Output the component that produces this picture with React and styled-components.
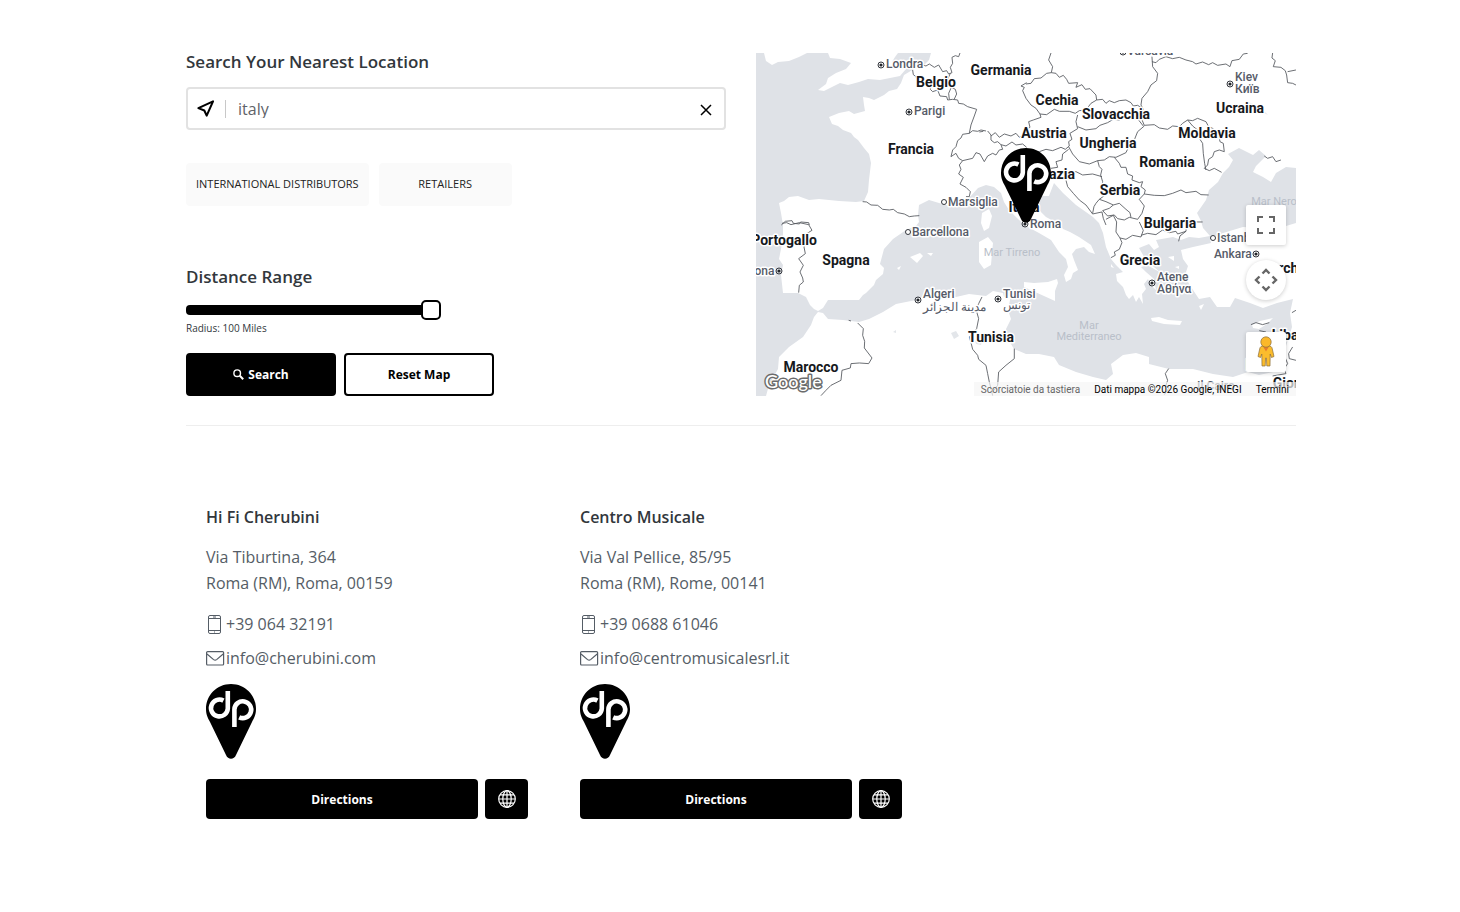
import React, { useState } from 'react';
import styled, { createGlobalStyle } from 'styled-components';

const GlobalStyle = createGlobalStyle`
  *, *::before, *::after {
    box-sizing: border-box;
  }

  body {
    margin: 0;
    background-color: #ffffff;
    color: #555d66;
    font-family: 'Open Sans', 'Noto Sans', sans-serif;
    font-size: 16px;
  }

  button, input {
    font-family: inherit;
  }

  h2, h3, p, ul, address {
    margin: 0;
    padding: 0;
    font-style: normal;
  }
`;

const Page = styled.main`
  max-width: 1132px;
  margin: 0 auto;
  padding: 53px 0 60px 22px;
`;

const Finder = styled.section`
  display: grid;
  grid-template-columns: 1fr 1fr;
  gap: 30px;
  padding-bottom: 29px;
  border-bottom: 1px solid #eeeeee;

  @media (max-width: 860px) {
    grid-template-columns: 1fr;
  }
`;

const SearchForm = styled.form`
  display: flex;
  flex-direction: column;
  align-items: flex-start;
`;

const FieldLabel = styled.label`
  font-size: 17px;
  line-height: 18px;
  font-weight: 600;
  color: #32373c;
`;

const SearchBox = styled.div`
  display: flex;
  align-items: center;
  width: 100%;
  height: 43px;
  margin: 16px 0 33px;
  padding: 0 10px 0 8px;
  border: 2px solid #e2e2e2;
  border-radius: 4px;
`;

const SearchInput = styled.input`
  flex: 1;
  min-width: 0;
  height: 18px;
  margin-left: 10px;
  padding: 0 12px;
  border: 0;
  border-left: 1px solid #c8c8c8;
  outline: none;
  font-size: 16px;
  line-height: 18px;
  color: #5f6368;
`;

const ClearButton = styled.button`
  display: flex;
  padding: 3px 2px 0;
  border: 0;
  background: none;
  cursor: pointer;
`;

const Categories = styled.div`
  display: flex;
  gap: 10px;
  margin-bottom: 62px;
`;

const CategoryButton = styled.button`
  min-width: 133px;
  height: 43px;
  padding: 0 10px 2px;
  border: 0;
  border-radius: 4px;
  background-color: #fafafa;
  color: #222222;
  font-size: 11px;
  text-transform: uppercase;
  cursor: pointer;
`;

const RangeInput = styled.input`
  appearance: none;
  width: 255px;
  height: 20px;
  margin: 14px 0 2px;
  background: none;

  &::-webkit-slider-runnable-track {
    height: 10px;
    border-radius: 4px;
    background-color: #000000;
  }

  &::-webkit-slider-thumb {
    appearance: none;
    width: 20px;
    height: 20px;
    margin-top: -5px;
    border: 2px solid #000000;
    border-radius: 5px;
    background-color: #ffffff;
  }
`;

const RangeValue = styled.p`
  font-size: 10px;
  line-height: 12px;
  color: #32373c;
`;

const Actions = styled.div`
  display: flex;
  gap: 8px;
  margin-top: 19px;
`;

const ActionButton = styled.button`
  display: flex;
  align-items: center;
  justify-content: center;
  gap: 4px;
  width: 150px;
  height: 43px;
  border: 2px solid #000000;
  border-radius: 4px;
  background-color: ${props => props.$outlined ? '#ffffff' : '#000000'};
  color: ${props => props.$outlined ? '#000000' : '#ffffff'};
  font-size: 12px;
  font-weight: 700;
  cursor: pointer;
`;

const MapFrame = styled.div`
  position: relative;
  overflow: hidden;
  min-height: 343px;
  background-color: #dfe2e7;
`;

const MapDrawing = styled.svg`
  position: absolute;
  inset: 0;
  width: 100%;
  height: 100%;
  font-family: Roboto, sans-serif;

  text {
    paint-order: stroke;
    stroke: #ffffff;
    stroke-width: 3px;
    stroke-linejoin: round;
  }

  .country {
    font-size: 14px;
    font-weight: 700;
    fill: #16181c;
  }

  .city {
    font-size: 12px;
    font-weight: 500;
    fill: #565b68;
  }

  .sea {
    font-size: 11px;
    fill: #b9bfc9;
    stroke: none;
  }

  .logo {
    font-family: Lato, sans-serif;
    font-size: 18px;
    font-weight: 500;
    fill: #ffffff;
    stroke: #6b6b6b;
  }
`;

const MapControls = styled.div`
  position: absolute;
  top: 152px;
  right: 10px;
  bottom: 24px;
  display: flex;
  flex-direction: column;
  justify-content: space-between;
`;

const ControlGroup = styled.div`
  display: flex;
  flex-direction: column;
  gap: 15px;
`;

const MapControl = styled.button`
  display: flex;
  align-items: center;
  justify-content: center;
  width: 40px;
  height: 40px;
  padding: 0;
  border: 0;
  border-radius: ${props => props.$round ? '50%' : '2px'};
  background-color: #ffffff;
  box-shadow: 0 1px 4px rgba(0, 0, 0, 0.2);
  cursor: pointer;
`;

const MapFooter = styled.div`
  position: absolute;
  right: 0;
  bottom: 0;
  display: flex;
  font-family: Roboto, sans-serif;
  font-size: 10px;
  line-height: 12px;
`;

const FooterItem = styled.span`
  padding: 2px 7px 0;
  background-color: rgba(245, 245, 245, 0.7);
  color: ${props => props.$muted ? '#666666' : '#000000'};
`;

const FooterLink = styled.a`
  padding: 2px 7px 0;
  background-color: rgba(245, 245, 245, 0.7);
  color: #000000;
  text-decoration: none;
`;

const StoreList = styled.ul`
  display: grid;
  grid-template-columns: repeat(3, 1fr);
  gap: 52px;
  padding: 81px 20px 0;
  list-style: none;

  @media (max-width: 960px) {
    grid-template-columns: 1fr;
  }
`;

const StoreName = styled.h3`
  margin-bottom: 17px;
  font-size: 16px;
  line-height: 20px;
  font-weight: 600;
  color: #32373c;
`;

const StoreAddress = styled.address`
  margin-bottom: 15px;
  line-height: 26px;
`;

const ContactLink = styled.a`
  display: flex;
  align-items: center;
  gap: 1px;
  margin-bottom: 8px;
  line-height: 26px;
  color: #555d66;
  text-decoration: none;
`;

const StorePin = styled.div`
  display: flex;
  margin: 13px 0 20px;
`;

const StoreActions = styled.div`
  display: flex;
  gap: 7px;
`;

const StoreLink = styled.a`
  flex: ${props => props.$icon ? '0 0 43px' : '1'};
  display: flex;
  align-items: center;
  justify-content: center;
  height: 40px;
  border-radius: 4px;
  background-color: #000000;
  color: #ffffff;
  font-size: 12px;
  font-weight: 700;
  text-decoration: none;
`;

const LAND = [
  // Ireland and Great Britain
  'M8 0L10 8 16 12 22 9 33 8 43 4 51 0Z',
  'M72 0L74 5 84 6 95 10 90 16 80 20 72 25 70 31 62 37 68 38 78 33 84 30 92 32 103 29 112 26 124 27 134 25 144 23 150 16 146 12 140 10 136 9 139 4 142 0Z',
  // mainland Europe and the Middle East
  'M175 0L173 7 168 12 158 16 148 22 145 30 141 36 133 38 128 42 118 47 113 45 107 44 108 52 109 58 98 61 93 58 83 60 73 64 76 71 82 73 87 77 95 80 98 84 102 87 108 95 113 101 115 110 113 127 112 139 108 148 100 149 83 148 63 146 53 147 42 143 33 144 28 148 23 150 25 160 27 172 27 186 23 206 27 212 25 222 27 240 42 240 50 244 54 252 58 256 62 258 67 255 72 247 87 247 103 247 107 242 110 240 118 232 120 227 127 221 128 215 124 211 128 196 137 186 150 177 160 173 163 169 162 162 163 152 173 147 183 150 197 154 213 145 222 135 230 132 238 134 245 140 248 149 253 157 262 166 270 173 283 180 295 187 303 199 310 206 312 214 308 222 310 229 315 226 317 220 322 217 318 207 316 201 320 196 328 194 333 199 339 201 335 192 323 184 314 179 307 176 303 171 290 164 283 157 282 148 286 143 293 143 298 130 307 140 320 152 337 164 343 170 347 180 350 194 355 206 360 212 367 219 360 221 361 228 367 234 370 242 373 246 377 242 380 249 383 244 387 251 386 241 390 236 388 231 392 226 395 232 400 237 398 226 390 219 385 214 392 212 387 202 383 195 393 191 398 197 403 194 400 187 417 184 425 187 433 184 443 185 454 183 447 175 445 168 441 160 450 147 453 137 462 129 467 120 473 114 477 107 472 101 483 95 497 102 503 97 510 103 500 113 497 119 507 124 515 129 520 120 530 114 540 115 540 0Z',
  // Anatolia, the Levant and north Africa
  'M425 197L437 194 455 190 454 186 467 180 487 174 505 175 520 176 540 170 540 343 10 343 13 332 22 316 23 304 33 294 47 284 55 272 58 264 62 259 67 260 72 266 87 267 103 269 113 266 127 259 140 251 160 247 170 242 188 242 200 244 213 241 230 243 237 238 247 240 248 244 255 242 252 257 255 266 250 276 252 286 258 296 270 301 283 301 298 304 303 312 320 319 337 324 350 327 357 321 355 311 367 302 380 300 393 304 393 311 413 316 437 316 457 321 477 324 492 319 503 322 517 319 527 302 533 284 536 274 534 260 537 246 521 250 507 255 494 250 479 245 474 254 461 254 454 244 443 246 437 237 432 229 430 219 432 213 427 206Z',
  // islands
  'M268 229L278 230 292 229 301 226 302 230 299 238 299 248 288 243 268 234Z',
  'M223 189L232 184 237 190 236 200 235 212 228 216 223 209Z',
  'M226 160L233 156 236 163 233 175 228 178 225 170Z',
  'M154 204L164 200 167 203 161 210Z',
  'M171 200L177 200 175 203Z',
  'M141 215L145 213 143 217Z',
  'M395 265L403 264 412 267 426 268 424 272 408 271 396 268Z',
  'M496 272L504 268 517 265 511 271 503 276 497 275Z',
  'M443 253L448 251 445 257Z',
  'M392 209L398 214 405 220 400 217 391 212Z',
  'M412 204L418 203 418 208Z',
  'M419 214L423 213 423 216Z',
  'M355 211L358 215 355 214Z',
  'M363 226L366 229 362 228Z',
];

const LAKES = [
  'M490 48L502 53 508 58 512 62 504 58 494 53Z',
  'M195 280L200 278 203 283 198 286Z',
  'M219 288L227 286 225 292 220 291Z',
  'M137 279L140 277 140 280Z',
];

// border lines are traced on a three times larger grid, one list per map quarter
const BORDERS = [
  {
    offset: 'translate(0 -9)',
    lines: [
      'M612 9L608 20 598 17 588 22 590 40 583 52 588 68 578 72 572 62 560 65 548 45 535 52 520 42 510 48 500 45',
      'M470 60L472 74 480 80 484 92 500 98 508 92 524 102 523 118 530 125 545 120 552 138 572 140 575 150 590 148 605 150 608 160 622 162 635 170 662 178 655 198 645 225 640 250',
      'M583 70L575 88 590 96 586 112 598 118 602 132 595 147M586 112L578 130 580 148',
      'M640 250L620 253 615 264 605 272 600 290 590 300 585 320 600 310 608 325 620 332 610 345 615 358 608 372 622 382 612 402 630 412 643 425 640 440 630 440',
      'M640 250L650 242 665 244 675 240 690 243M695 243L705 255 705 270 715 278 725 275 735 284M670 246L682 244',
      'M620 332L650 325 660 308 672 312 685 335 695 318 710 310 720 315 730 300 740 298 735 284 750 288 768 276 780 285 800 282 812 292',
      'M705 258L718 248 730 262 745 252 765 258 780 250 790 262 812 248',
      'M320 455L332 456 345 465 365 466 380 478 400 480 412 478 425 488 445 492 460 500 475 498 490 497',
      'M810 145L800 122 805 112 795 108 812 98',
      'M76 525L88 514 108 512 112 520 130 522 134 516 158 518 160 525',
    ],
  },
  {
    offset: 'translate(810 -9)',
    lines: [
      'M75 9L68 30 80 50 76 68 90 70 100 82 112 76 122 88 128 100 155 98 150 112 168 104 178 118 192 116 210 135 212 150',
      'M0 102L15 100 25 86 45 84 62 70 76 68',
      'M212 150L230 148 240 160 250 152 265 158 280 152 300 150 315 158 322 168 335 166 348 174',
      'M0 145L15 165 30 175 42 192 62 194 85 178 100 184 130 184 148 190 160 182 180 180 195 160 212 150',
      'M42 192L45 202 22 210 8 215 12 232 0 240',
      'M0 300L20 302 40 305 60 298 80 302 105 292 118 298 130 288 128 275 138 268 132 250 155 236 150 215 155 195',
      'M155 230L180 240 210 236 222 226 245 218 262 208 280 210 300 198 330 200 352 228',
      'M378 20L380 50 395 70 392 92 375 105 365 125 348 145 345 165 352 178 342 195 355 226 385 224 400 234 425 238 440 228 460 230 470 220 485 210 500 212 515 205 540 215 548 230 562 236 565 250 580 262 582 275 592 280 595 305 580 300 565 305 560 320 548 328 545 345 535 355 550 362 565 355 587 367',
      'M485 210L500 228 515 240 518 262 530 280 532 310 536 340 540 360',
      'M378 35L390 38 400 28 420 20 440 26 460 22 480 30 500 35 510 42 530 36 548 44 560 38 575 46 600 42 612 50 618 32 640 28 652 12 665 10',
      'M740 9L738 24 748 32 742 50 765 52 778 62 782 75 785 98 800 100 810 105',
      'M785 65L810 60M715 318L725 325 740 320 750 335 765 330',
      'M355 228L335 245 325 270 312 282 300 308 270 322 250 320 235 330 215 332 190 342 160 335 140 312 128 290',
      'M128 298L110 312 108 330 90 335 95 352 75 355',
      'M112 360L130 366 150 365 170 375 200 372 228 380M112 360L125 410 142 430 160 450 180 465 200 492',
      'M215 332L220 350 228 358 224 375 230 395 228 415 238 435 220 448 210 460 204 470 200 490',
      'M265 322L280 340 285 352 300 352 305 372 320 378 318 390 340 398 350 395 345 410 358 420 355 432',
      'M355 432L385 436 415 437 440 430 465 420 480 428 510 424 525 434 548 435',
      'M355 432L340 448 355 468 348 490 335 508 310 502 295 510 275 506 265 495 245 498 230 482 250 475 262 465 240 455 220 448',
      'M200 492L228 486 232 505 240 525M262 465L280 460 300 478 312 488 315 502',
    ],
  },
  {
    offset: 'translate(0 507)',
    lines: [
      'M78 4L92 2 105 8 130 2 158 8 168 25 152 35 150 50 144 75 148 95 128 110 142 130 132 150 140 168 142 180 130 190 128 212',
      'M278 295L285 297M305 303L322 320 320 340 326 358 325 378 348 408 338 425 310 423 285 425 283 438 258 445 255 475 225 490 210 505 195 521',
      'M678 225L668 245 660 262 668 290 662 320 640 345 645 362 650 382 665 400 668 412 690 430 695 455 700 480 705 500 710 521M725 490L728 450 750 430 775 410 775 380M710 510L725 490',
    ],
  },
  {
    offset: 'translate(810 507)',
    lines: [
      'M240 -8L262 -20 272 0 270 30 282 48 300 52 320 40 345 45 352 25 340 0',
      'M282 48L288 62 280 82 265 90 268 100 255 107M345 40L365 34 390 38 410 24 430 32 450 28 455 36 480 28 482 10 500 0 530 0M480 28L462 42 458 58',
      'M428 440L418 455 425 475 420 490 428 500 415 518',
      'M675 308L690 302 710 308 730 302M810 265L798 272M800 375L788 395 790 410 810 415M775 400L785 425 775 440 780 455 740 462M700 326L720 330',
    ],
  },
];

const COUNTRIES = [
  ['Germania', 245, 22],
  ['Belgio', 180, 34],
  ['Cechia', 301, 52],
  ['Slovacchia', 360, 66],
  ['Ucraina', 484, 60],
  ['Austria', 288, 85],
  ['Ungheria', 352, 95],
  ['Moldavia', 451, 85],
  ['Francia', 155, 101],
  ['Romania', 411, 114],
  ['Croazia', 295, 126],
  ['Serbia', 364, 142],
  ['Italia', 268, 159],
  ['Bulgaria', 414, 175],
  ['Portogallo', 28, 192],
  ['Spagna', 90, 212],
  ['Grecia', 384, 212],
  ['Turchia', 530, 220],
  ['Tunisia', 235, 289],
  ['Marocco', 55, 319],
  ['Libano', 537, 287],
  ['Israel', 507, 317],
  ['Giordania', 547, 335],
];

const CITIES = [
  { name: 'Londra', x: 130, y: 15, dot: [125, 12] },
  { name: 'Parigi', x: 158, y: 62, dot: [153, 59] },
  { name: 'Varsavia', x: 371, y: 2, dot: [367, -1] },
  { name: 'Kiev', x: 479, y: 28, dot: [474, 31] },
  { name: 'Київ', x: 479, y: 40 },
  { name: 'Marsiglia', x: 192, y: 153, dot: [188, 149], open: true },
  { name: 'Barcellona', x: 156, y: 183, dot: [152, 179], open: true },
  { name: 'Roma', x: 274, y: 175, dot: [269, 171] },
  { name: 'Istanbul', x: 461, y: 189, dot: [457, 185], open: true },
  { name: 'Ankara', x: 458, y: 205, dot: [500, 201] },
  { name: 'Atene', x: 401, y: 228, dot: [396, 230] },
  { name: 'Αθήνα', x: 401, y: 240 },
  { name: 'Lisbona', x: -24, y: 222, dot: [23, 218] },
  { name: 'Algeri', x: 167, y: 245, dot: [162, 247] },
  { name: 'مدينة الجزائر', x: 167, y: 258, rtl: true },
  { name: 'Tunisi', x: 247, y: 245, dot: [242, 246] },
  { name: 'تونس', x: 247, y: 256, rtl: true },
  { name: 'Il Cairo', x: 441, y: 337 },
];

const SEAS = [
  ['Mar Nero', 518, 152],
  ['Mar Tirreno', 256, 203],
  ['Mar', 333, 276],
  ['Mediterraneo', 333, 287],
];

const STORES = [
  {
    name: 'Hi Fi Cherubini',
    street: 'Via Tiburtina, 364',
    city: 'Roma (RM), Roma, 00159',
    phone: '+39 064 32191',
    email: 'info@cherubini.com',
  },
  {
    name: 'Centro Musicale',
    street: 'Via Val Pellice, 85/95',
    city: 'Roma (RM), Rome, 00141',
    phone: '+39 0688 61046',
    email: 'info@centromusicalesrl.it',
  },
];

const PinShape = () => (
  <>
    <path d="M25 0C39 0 50 11 50 25C50 31 48 34 46 38L30 71C28 76 22 76 20 71L4 38C2 34 0 31 0 25C0 11 11 0 25 0Z" fill="#000" />
    <g fill="none" stroke="#fff" strokeWidth="4.6">
      <path d="M21.8 7V24.6A8.4 8.4 0 1 1 17.4 16.6" />
      <path d="M28.4 43V25.3A8.4 8.4 0 1 1 33.2 33.3" />
    </g>
  </>
);

const NavigationIcon = () => (
  <svg width="19" height="19" viewBox="0 0 24 24" fill="none" stroke="#000" strokeWidth="2.6" strokeLinejoin="round" aria-hidden="true">
    <path d="M3 11.5L21.5 3 13.5 21 10.5 14.5Z" />
  </svg>
);

const CloseIcon = () => (
  <svg width="12" height="12" viewBox="0 0 12 12" fill="none" stroke="#000" strokeWidth="1.5" aria-hidden="true">
    <path d="M1 1L11 11M11 1L1 11" />
  </svg>
);

const SearchIcon = () => (
  <svg width="11" height="11" viewBox="0 0 11 11" fill="none" stroke="#fff" aria-hidden="true">
    <circle cx="4.2" cy="4.2" r="3.3" strokeWidth="1.4" />
    <path d="M6.8 6.8L10.2 10.2" strokeWidth="2" />
  </svg>
);

const PhoneIcon = () => (
  <svg width="19" height="19" viewBox="0 0 19 19" fill="none" stroke="#555d66" aria-hidden="true">
    <rect x="2.5" y="0.5" width="12" height="18" rx="1.5" />
    <path d="M2.5 3.5H14.5M2.5 15.5H14.5M7 2H10M8 17H9" />
  </svg>
);

const MailIcon = () => (
  <svg width="19" height="19" viewBox="0 0 19 19" fill="none" stroke="#555d66" strokeWidth="1.2" aria-hidden="true">
    <rect x="0.6" y="2.6" width="17" height="13.4" rx="1" />
    <path d="M1 5L7.6 10.6C8.6 11.4 9.6 11.4 10.6 10.6L17.2 5" />
  </svg>
);

const GlobeIcon = () => (
  <svg width="18" height="18" viewBox="0 0 18 18" fill="none" stroke="#fff" strokeWidth="1.2" aria-hidden="true">
    <circle cx="9" cy="9" r="8.3" />
    <ellipse cx="9" cy="9" rx="4.2" ry="8.3" />
    <path d="M9 1V17M1 9H17M2 4.8H16M2 13.2H16" />
  </svg>
);

const FullscreenIcon = () => (
  <svg width="18" height="18" viewBox="0 0 18 18" fill="#666" aria-hidden="true">
    <path d="M0 0V6H2V2H6V0ZM16 0H12V2H16V6H18V0ZM16 16H12V18H18V12H16ZM2 12H0V18H6V16H2Z" />
  </svg>
);

const CameraIcon = () => (
  <svg width="24" height="24" viewBox="0 0 24 24" fill="none" stroke="#666" strokeWidth="2.4" aria-hidden="true">
    <path d="M8.5 5.5L12 2 15.5 5.5M18.5 8.5L22 12 18.5 15.5M15.5 18.5L12 22 8.5 18.5M5.5 15.5L2 12 5.5 8.5" />
  </svg>
);

const PegmanIcon = () => (
  <svg width="18" height="32" viewBox="0 0 18 32" stroke="#8a6d3b" strokeWidth="0.7" aria-hidden="true">
    <path d="M5 10H13C14.5 10.5 15 11.5 15.3 13L17 20.5 14.5 21.5 13.2 18 13 30H9.8L9.4 22H8.6L8.2 30H5L4.8 18 3.5 21.5 1 20.5 2.7 13C3 11.5 3.5 10.5 5 10Z" fill="#fbbc2c" />
    <path d="M6 10.5H12L9 15.5Z" fill="#e57c2e" stroke="none" />
    <circle cx="9" cy="6" r="5.2" fill="#fbb829" />
  </svg>
);

const CityMark = ({ dot, open }) => (
  <g fill={open ? '#fff' : 'none'} stroke="#33363d">
    <circle cx={dot[0]} cy={dot[1]} r={open ? 2.5 : 3} />
    {!open && <circle cx={dot[0]} cy={dot[1]} r="1.6" fill="#22252a" stroke="none" />}
  </g>
);

const StoreMap = () => (
  <MapFrame>
    <MapDrawing viewBox="0 0 540 343" preserveAspectRatio="xMidYMid slice" role="img" aria-label="Map">
      <g fill="#fff">
        {LAND.map(d => <path key={d} d={d} />)}
      </g>
      <g fill="#e3e6ea">
        {LAKES.map(d => <path key={d} d={d} />)}
      </g>
      <g transform="scale(0.3333)" fill="none" stroke="#55585e" strokeWidth="2.6">
        {BORDERS.map(quarter => (
          <g key={quarter.offset} transform={quarter.offset}>
            {quarter.lines.map(d => <path key={d} d={d} />)}
          </g>
        ))}
      </g>
      {SEAS.map(([name, x, y]) => (
        <text key={name} className="sea" x={x} y={y} textAnchor="middle">{name}</text>
      ))}
      {CITIES.map(city => (
        <g key={city.name}>
          <text
            className="city"
            x={city.x}
            y={city.y}
            direction={city.rtl ? 'rtl' : 'ltr'}
            textAnchor={city.rtl ? 'end' : 'start'}
          >
            {city.name}
          </text>
          {city.dot && <CityMark dot={city.dot} open={city.open} />}
        </g>
      ))}
      {COUNTRIES.map(([name, x, y]) => (
        <text key={name} className="country" x={x} y={y} textAnchor="middle">{name}</text>
      ))}
      <g transform="translate(245 95)">
        <PinShape />
      </g>
      <text className="logo" x="9" y="335">Google</text>
    </MapDrawing>
    <MapFooter>
      <FooterItem $muted>Scorciatoie da tastiera</FooterItem>
      <FooterItem>Dati mappa ©2026 Google, INEGI</FooterItem>
      <FooterLink href="#terms">Termini</FooterLink>
    </MapFooter>
    <MapControls>
      <ControlGroup>
        <MapControl type="button" aria-label="Fullscreen"><FullscreenIcon /></MapControl>
        <MapControl type="button" aria-label="Camera controls" $round><CameraIcon /></MapControl>
      </ControlGroup>
      <MapControl type="button" aria-label="Street View"><PegmanIcon /></MapControl>
    </MapControls>
  </MapFrame>
);

const StoreCard = ({ store }) => (
  <li>
    <StoreName>{store.name}</StoreName>
    <StoreAddress>
      {store.street}<br />
      {store.city}
    </StoreAddress>
    <ContactLink href={`tel:${store.phone}`}><PhoneIcon />{store.phone}</ContactLink>
    <ContactLink href={`mailto:${store.email}`}><MailIcon />{store.email}</ContactLink>
    <StorePin>
      <svg width="50" height="75" viewBox="0 0 50 75" aria-hidden="true"><PinShape /></svg>
    </StorePin>
    <StoreActions>
      <StoreLink href="#directions">Directions</StoreLink>
      <StoreLink href="#website" aria-label="Website" $icon><GlobeIcon /></StoreLink>
    </StoreActions>
  </li>
);

const App = () => {
  const [query, setQuery] = useState('italy');
  const [radius, setRadius] = useState(100);

  return (
    <>
      <GlobalStyle />
      <Page>
        <Finder>
          <SearchForm onSubmit={e => e.preventDefault()}>
            <FieldLabel htmlFor="location">Search Your Nearest Location</FieldLabel>
            <SearchBox>
              <NavigationIcon />
              <SearchInput id="location" type="text" value={query} onChange={e => setQuery(e.target.value)} />
              <ClearButton type="button" aria-label="Clear" onClick={() => setQuery('')}>
                <CloseIcon />
              </ClearButton>
            </SearchBox>
            <Categories>
              <CategoryButton type="button">International Distributors</CategoryButton>
              <CategoryButton type="button">Retailers</CategoryButton>
            </Categories>
            <FieldLabel htmlFor="radius">Distance Range</FieldLabel>
            <RangeInput
              id="radius"
              type="range"
              min="0"
              max="100"
              value={radius}
              onChange={e => setRadius(Number(e.target.value))}
            />
            <RangeValue>Radius: {radius} Miles</RangeValue>
            <Actions>
              <ActionButton type="submit"><SearchIcon />Search</ActionButton>
              <ActionButton type="button" $outlined onClick={() => setQuery('')}>Reset Map</ActionButton>
            </Actions>
          </SearchForm>
          <StoreMap />
        </Finder>
        <StoreList>
          {STORES.map(store => <StoreCard key={store.name} store={store} />)}
        </StoreList>
      </Page>
    </>
  );
};

export default App;
